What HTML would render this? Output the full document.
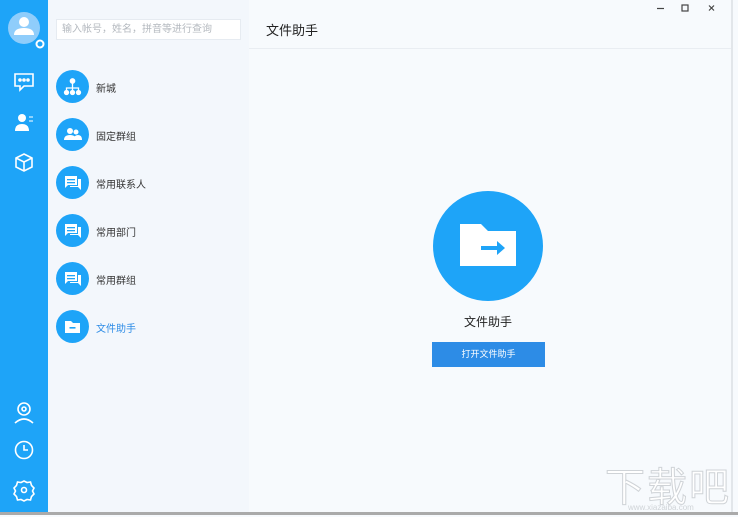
<!DOCTYPE html>
<html><head><meta charset="utf-8"><style>
*{margin:0;padding:0;box-sizing:border-box}
body{width:738px;height:515px;overflow:hidden;background:#f7fafd;font-family:"Liberation Sans","Noto Sans CJK SC",sans-serif;position:relative}
.side{position:absolute;left:0;top:0;width:48px;height:512px;background:#1ea4f8}
.list{position:absolute;left:48px;top:0;width:201px;height:512px;background:#f3f7fc}
.search{position:absolute;left:56px;top:19px;width:185px;height:21px;background:#fff;border:1px solid #e6ebf1;font-size:10px;color:#b4b9bf;padding:3px 5px;line-height:13px}
.item{position:absolute;left:56px;width:180px;height:34px}
.item .c{position:absolute;left:0;top:0;width:33px;height:33px;border-radius:50%;background:#1ea4f8}
.item .c svg{position:absolute;left:0;top:0}
.item span{position:absolute;left:40px;top:10px;font-size:10px;color:#333}
.main{position:absolute;left:249px;top:0;width:482px;height:512px;background:#f7fafd}
.hd{position:absolute;left:249px;top:0;width:482px;height:49px;border-bottom:1px solid #e9edf2}
.title{position:absolute;left:266px;top:20px;font-size:13px;color:#222}
.edge{position:absolute;left:731px;top:0;width:2px;height:512px;background:#e2e6ea}
.bot{position:absolute;left:0;top:512px;width:738px;height:3px;background:#aaa}
.big{position:absolute;left:433px;top:191px;width:110px;height:110px;border-radius:50%;background:#1ea4f8}
.btn{position:absolute;left:432px;top:342px;width:113px;height:25px;background:#2d8ce6;color:#fff;font-size:9px;text-align:center;line-height:25px}
</style></head><body>
<div class="side">
<svg width="48" height="512" viewBox="0 0 48 512" fill="none" stroke="#fff" stroke-width="1.6">
<circle cx="24" cy="28" r="16" fill="#8fcdfb" stroke="none"/>
<circle cx="24" cy="22" r="5" fill="#fff" stroke="none"/>
<path d="M14 35 q0 -7 10 -7 q10 0 10 7z" fill="#fff" stroke="none"/>
<circle cx="40" cy="44" r="3.5" stroke-width="2"/>
<path d="M15 74 h18 v12 h-9 l-4 4 v-4 h-5z"/>
<circle cx="20" cy="80" r="1" fill="#fff"/><circle cx="24" cy="80" r="1" fill="#fff"/><circle cx="28" cy="80" r="1" fill="#fff"/>
<circle cx="22" cy="118" r="4" fill="#fff" stroke="none"/>
<path d="M15 131 q0 -7 7 -7 q7 0 7 7z" fill="#fff" stroke="none"/>
<path d="M29 117 h4 M29 121 h4" stroke-width="1"/>
<path d="M24 154 l8 4 v9 l-8 4 l-8 -4 v-9z M16 158 l8 4 l8 -4 M24 162 v9"/>
<circle cx="24" cy="409" r="6"/><circle cx="24" cy="409" r="2"/>
<path d="M15 423 q9 -8 18 0"/>
<circle cx="24" cy="450" r="8.5"/><path d="M24 445 v5 h4"/>
<path d="M24 481 l3 1.5 l3.5 -.5 l1 3.5 l2.5 2.5 l-1.5 3 l1.5 3 l-2.5 2.5 l-1 3.5 l-3.5 -.5 l-3 1.5 l-3 -1.5 l-3.5 .5 l-1 -3.5 l-2.5 -2.5 l1.5 -3 l-1.5 -3 l2.5 -2.5 l1 -3.5 l3.5 .5z"/>
<circle cx="24" cy="490" r="2.5"/>
</svg>
</div>
<div class="list"></div>
<div class="search">输入帐号，姓名，拼音等进行查询</div>

<div class="item" style="top:70px"><div class="c"><svg width="33" height="33" fill="#fff" stroke="#fff" stroke-width="1.3"><circle cx="16.5" cy="11" r="2.2"/><path d="M16.5 13 v9 M10.5 22 v-4 h12 v4" fill="none"/><circle cx="10.5" cy="22.5" r="2"/><circle cx="16.5" cy="22.5" r="2"/><circle cx="22.5" cy="22.5" r="2"/></svg></div><span>新城</span></div>
<div class="item" style="top:118px"><div class="c"><svg width="33" height="33" fill="#fff"><circle cx="14" cy="13" r="3"/><path d="M8 22 q0 -5 6 -5 q6 0 6 5z"/><circle cx="20" cy="14" r="2.5"/><path d="M17 22 q1 -5 5 -5 q4 0 4 5z"/></svg></div><span>固定群组</span></div>
<div class="item" style="top:166px"><div class="c"><svg width="33" height="33" fill="#fff"><path d="M9 10 h12 v9 h-9 l-3 3z"/><path d="M22 13 h3 v11 l-3 -3 h-8 v-1 h8z"/><rect x="11" y="13" width="8" height="1.3" fill="#1ea4f8"/><rect x="11" y="16" width="8" height="1.3" fill="#1ea4f8"/></svg></div><span>常用联系人</span></div>
<div class="item" style="top:214px"><div class="c"><svg width="33" height="33" fill="#fff"><path d="M9 10 h12 v9 h-9 l-3 3z"/><path d="M22 13 h3 v11 l-3 -3 h-8 v-1 h8z"/><rect x="11" y="13" width="8" height="1.3" fill="#1ea4f8"/><rect x="11" y="16" width="8" height="1.3" fill="#1ea4f8"/></svg></div><span>常用部门</span></div>
<div class="item" style="top:262px"><div class="c"><svg width="33" height="33" fill="#fff"><path d="M9 10 h12 v9 h-9 l-3 3z"/><path d="M22 13 h3 v11 l-3 -3 h-8 v-1 h8z"/><rect x="11" y="13" width="8" height="1.3" fill="#1ea4f8"/><rect x="11" y="16" width="8" height="1.3" fill="#1ea4f8"/></svg></div><span>常用群组</span></div>
<div class="item" style="top:310px"><div class="c"><svg width="33" height="33" fill="#fff"><path d="M9 11 h6 l2 2 h7 v10 h-15z"/><rect x="13.5" y="17" width="6" height="1.6" fill="#1ea4f8"/></svg></div><span style="color:#2d8ce6">文件助手</span></div>

<div class="main"></div>
<div class="hd"></div>
<div class="title">文件助手</div>
<svg style="position:absolute;left:640px;top:0" width="90" height="18" fill="none" stroke="#444" stroke-width="1.2"><path d="M17 8.5 h7"/><rect x="42" y="5" width="6" height="6"/><path d="M69 5.5 l5 5 M74 5.5 l-5 5"/></svg>
<div class="edge"></div>
<div class="big"><svg width="110" height="110" fill="#fff"><path d="M27 33 h21 l7 7 h28 v35 h-56z"/><path d="M48 55 h16 v-5 l8 7 l-8 7 v-5 h-16z" fill="#1ea4f8"/></svg></div>
<div style="position:absolute;left:433px;top:313px;width:110px;text-align:center;font-size:12px;color:#222">文件助手</div>
<div class="btn">打开文件助手</div>
<div style="position:absolute;left:605px;top:455px;font-size:40px;color:#fff;-webkit-text-stroke:1px #cfd3d7;letter-spacing:2px">下载吧</div>
<div style="position:absolute;left:628px;top:503px;font-size:8px;color:#d0d4d8">www.xiazaiba.com</div>
<div class="bot"></div>
</body></html>
